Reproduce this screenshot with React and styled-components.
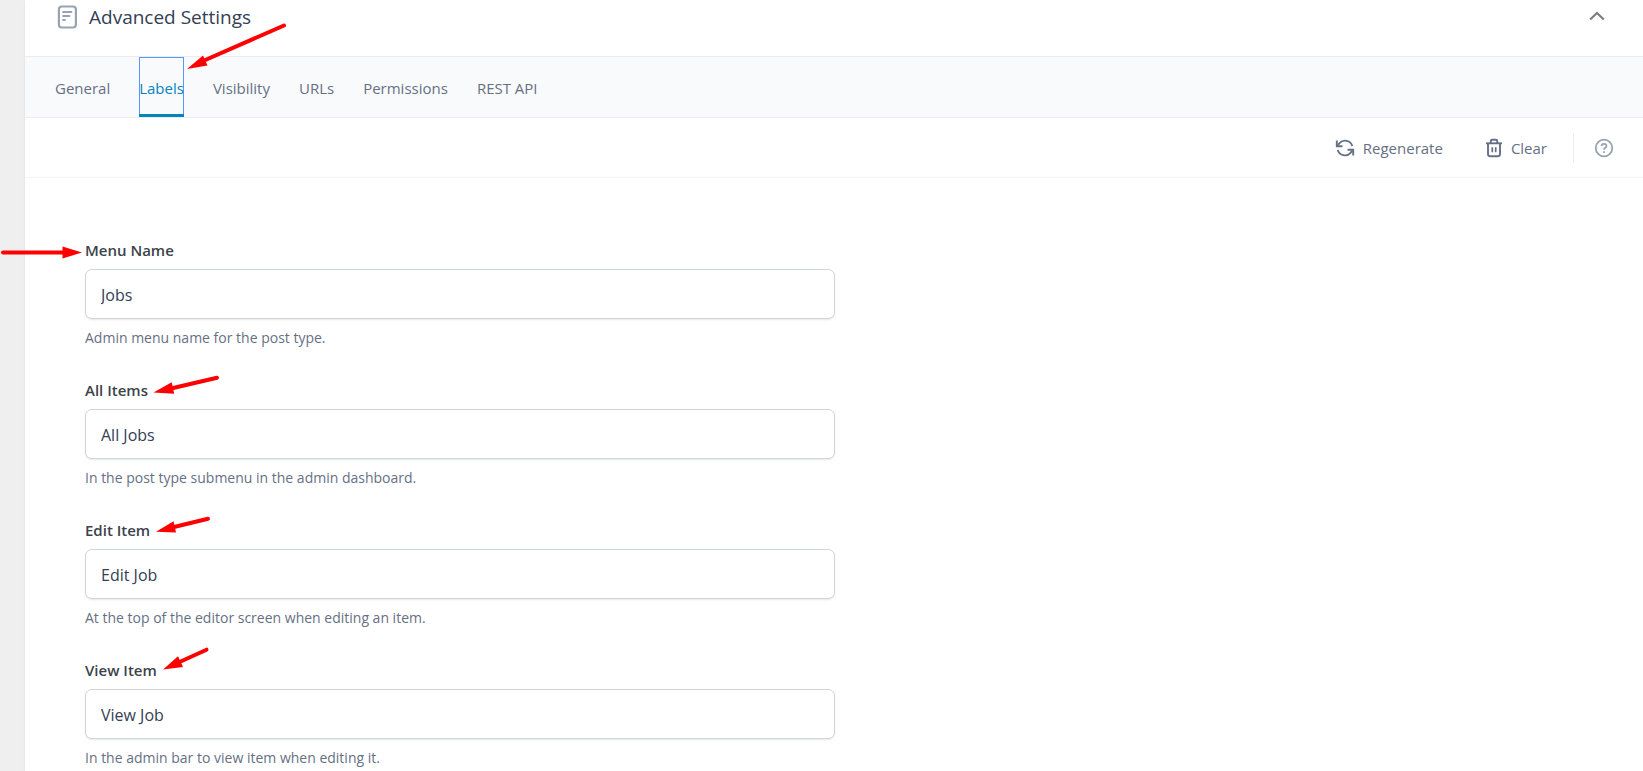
import React, { useState } from "react";
import styled, { createGlobalStyle } from "styled-components";

const GlobalStyle = createGlobalStyle`
    * {
        box-sizing: border-box;
    }

    body {
        margin: 0;
        color: #344054;
        background-color: #efefef;
        font-family: "Open Sans", "Noto Sans", sans-serif;
        font-size: 15px;
        overflow: hidden;
    }

    button, input {
        font: inherit;
    }

    svg {
        display: block;
    }
`

const Page = styled.div`
    position: relative;
    min-height: 100vh;
    padding-left: 25px;
`

const Panel = styled.section`
    min-height: 100vh;
    background-color: #fff;
    box-shadow: 0 1px 2px rgba(16, 24, 40, 0.1);
`

const Header = styled.header`
    display: flex;
    align-items: center;
    justify-content: space-between;
    padding: 0 38px 22px 32px;
    border-bottom: 1px solid #eaecf0;
`

const Title = styled.h2`
    display: flex;
    align-items: center;
    gap: 12px;
    margin: 0;
    font-size: 19px;
    font-weight: 400;
    line-height: 34px;
`

const IconButton = styled.button`
    display: flex;
    align-items: center;
    justify-content: center;
    padding: 0;
    color: ${props => props.$color};
    background-color: transparent;
    border: 0;
    cursor: pointer;
`

const Tabs = styled.nav`
    display: flex;
    gap: 29px;
    height: 61px;
    padding: 0 30px;
    background-color: #f9fafb;
    border-bottom: 1px solid #eaecf0;
`

const Tab = styled.a`
    display: flex;
    align-items: center;
    padding-top: 4px;
    color: ${props => props.$active ? "#0783be" : "#667085"};
    border-bottom: 3px solid ${props => props.$active ? "#0783be" : "transparent"};
    box-shadow: ${props => props.$active ? "inset 1px 1px #5897fb, inset -1px 0 #5897fb" : "none"};
    text-decoration: none;
`

const Toolbar = styled.div`
    display: flex;
    align-items: center;
    justify-content: flex-end;
    height: 60px;
    padding-right: 29px;
    border-bottom: 1px solid #f2f4f7;
`

const ToolButton = styled.button`
    display: flex;
    align-items: center;
    gap: 8px;
    margin-right: ${props => props.$last ? 26 : 42}px;
    padding: 0;
    color: #667085;
    background-color: transparent;
    border: 0;
    cursor: pointer;
`

const Help = styled.div`
    display: flex;
    align-items: center;
    height: 30px;
    padding-left: 20px;
    border-left: 1px solid #eaecf0;
`

const Fields = styled.form`
    display: grid;
    gap: 30px;
    max-width: 870px;
    padding: 61px 60px 0;
`

const Field = styled.div`
    display: grid;
    gap: 8px;
`

const Label = styled.label`
    justify-self: start;
    color: #3c434a;
    font-weight: 600;
    line-height: 22px;
`

const Input = styled.input`
    width: 100%;
    height: 50px;
    padding: 2px 15px 0;
    color: #344054;
    font-size: 16px;
    background-color: #fff;
    border: 1px solid #d0d5dd;
    border-radius: 7px;
    box-shadow: 0 1px 2px rgba(16, 24, 40, 0.1);
    outline: none;
`

const Hint = styled.p`
    margin: 0;
    color: #667085;
    font-size: 14px;
    line-height: 22px;
`

const Marks = styled.svg`
    position: absolute;
    top: 0;
    left: 0;
    pointer-events: none;
`

const tabs = ["General", "Labels", "Visibility", "URLs", "Permissions", "REST API"];

const fields = [
    { id: "menu_name", label: "Menu Name", value: "Jobs", hint: "Admin menu name for the post type." },
    { id: "all_items", label: "All Items", value: "All Jobs", hint: "In the post type submenu in the admin dashboard." },
    { id: "edit_item", label: "Edit Item", value: "Edit Job", hint: "At the top of the editor screen when editing an item." },
    { id: "view_item", label: "View Item", value: "View Job", hint: "In the admin bar to view item when editing it." },
];

const arrows = [
    { shaft: "M284 25.5 203 61", head: "187,69 203,55.5 207.5,65.5" },
    { shaft: "M3 252.5H65", head: "82,252.5 62.5,246.5 62.5,258.5" },
    { shaft: "M217 377.7 171 388.5", head: "153.5,392.5 171.7,382.3 174.2,393.7" },
    { shaft: "M208 518.7 173 527.3", head: "156,531.7 173.5,521.3 176,532.5" },
    { shaft: "M206.5 649.7 179 662.3", head: "163,669.5 178,656.2 183,667" },
];

const DocumentIcon = () => (
    <svg width="20" height="24" viewBox="0 0 20 24" fill="none" stroke="#98a2b3" strokeWidth="2.2" strokeLinecap="round">
        <rect x="1.900" y="1.500" width="17" height="21" rx="3" />
        <path d="M6 7h8.500M6 11h6.500M6 15h2" strokeWidth="1.800" />
    </svg>
)

const ChevronIcon = () => (
    <svg width="16" height="16" viewBox="0 0 16 16" fill="none" stroke="currentColor" strokeWidth="2.2">
        <path d="M1.200 10.500 8 4 14.800 10.500" />
    </svg>
)

const RefreshIcon = () => (
    <svg width="20" height="20" viewBox="0 0 20 20" fill="none" stroke="currentColor" strokeWidth="1.9">
        <path d="M1.800 2.500V8.200H7.500" />
        <path d="M2.200 8 4.500 5.200A7.500 7.500 0 0 1 17.300 8" />
        <path d="M18.200 17.500V11.800H12.500" />
        <path d="M17.800 12 15.500 14.800A7.500 7.500 0 0 1 2.700 12" />
    </svg>
)

const TrashIcon = () => (
    <svg width="18" height="20" viewBox="0 0 18 20" fill="none" stroke="currentColor" strokeWidth="1.9">
        <path d="M1 5.300H17" />
        <path d="M5.800 5V3Q5.800 1.800 7 1.800H11Q12.200 1.800 12.200 3V5" />
        <path d="M3 5.300V16Q3 18.200 5.200 18.200H12.800Q15 18.200 15 16V5.300" />
        <path d="M7.300 9.300V14.300M10.700 9.300V14.300" strokeWidth="1.700" />
    </svg>
)

const HelpIcon = () => (
    <svg width="20" height="20" viewBox="0 0 20 20" fill="none" stroke="currentColor" strokeWidth="1.8">
        <circle cx="10" cy="10" r="8.300" />
        <path d="M7.500 8Q7.700 5.800 10 5.800T12.500 8C12.500 9.700 10 9.700 10 11.700" />
        <path d="M10 13.200V15" />
    </svg>
)

const App = () => {
    const [active, setActive] = useState("Labels");

    const handleTab = (e, name) => {
        e.preventDefault();
        setActive(name);
    }

    return (
        <Page>
            <GlobalStyle />
            <Panel>
                <Header>
                    <Title>
                        <DocumentIcon />
                        Advanced Settings
                    </Title>
                    <IconButton type="button" $color="#7b7f87" aria-label="Collapse">
                        <ChevronIcon />
                    </IconButton>
                </Header>
                <Tabs>
                    {tabs.map(name => (
                        <Tab
                            key={name}
                            href="#"
                            $active={name === active}
                            onClick={e => handleTab(e, name)}
                        >
                            {name}
                        </Tab>
                    ))}
                </Tabs>
                <Toolbar>
                    <ToolButton type="button">
                        <RefreshIcon />
                        Regenerate
                    </ToolButton>
                    <ToolButton type="button" $last>
                        <TrashIcon />
                        Clear
                    </ToolButton>
                    <Help>
                        <IconButton type="button" $color="#98a2b3" aria-label="Help">
                            <HelpIcon />
                        </IconButton>
                    </Help>
                </Toolbar>
                <Fields>
                    {fields.map(({ id, label, value, hint }) => (
                        <Field key={id}>
                            <Label htmlFor={id}>{label}</Label>
                            <Input id={id} type="text" defaultValue={value} />
                            <Hint>{hint}</Hint>
                        </Field>
                    ))}
                </Fields>
            </Panel>
            <Marks width="300" height="700" viewBox="0 0 300 700" aria-hidden="true">
                {arrows.map(({ shaft, head }) => (
                    <g key={head}>
                        <path d={shaft} stroke="#f00" strokeWidth="4" strokeLinecap="round" />
                        <polygon points={head} fill="#f00" />
                    </g>
                ))}
            </Marks>
        </Page>
    );
}

export default App;
